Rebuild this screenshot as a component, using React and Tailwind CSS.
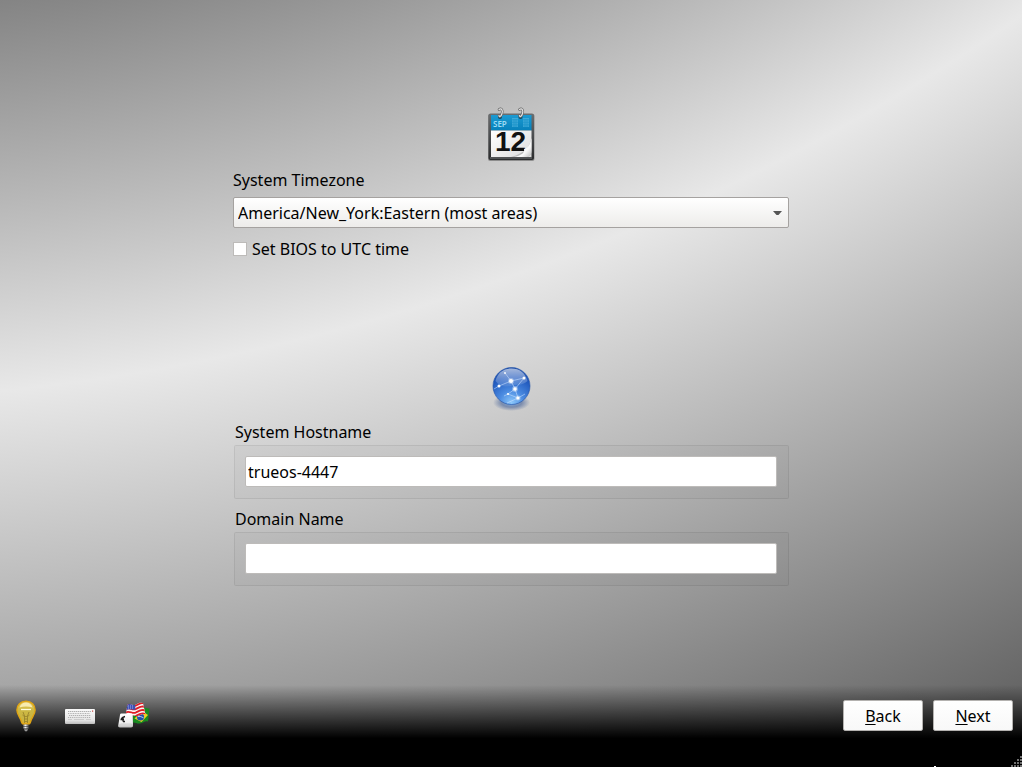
import React from "react";

function CalendarIcon() {
  return (
    <svg width="48" height="56" viewBox="0 0 48 56" aria-hidden="true">
      <defs>
        <linearGradient id="calFrame" x1="0" y1="0" x2="0" y2="1">
          <stop offset="0" stopColor="#6b6e70" />
          <stop offset="0.5" stopColor="#4a4c4e" />
          <stop offset="1" stopColor="#2b2c2d" />
        </linearGradient>
        <linearGradient id="calHead" x1="0" y1="0" x2="0" y2="1">
          <stop offset="0" stopColor="#1b9ad2" />
          <stop offset="1" stopColor="#0781bb" />
        </linearGradient>
        <linearGradient id="calPage" x1="0" y1="0" x2="1" y2="1">
          <stop offset="0" stopColor="#ffffff" />
          <stop offset="1" stopColor="#dcdcdc" />
        </linearGradient>
        <linearGradient id="calCurl" x1="0" y1="0" x2="1" y2="1">
          <stop offset="0.4" stopColor="#ffffff" />
          <stop offset="0.7" stopColor="#f8f8f8" />
          <stop offset="1" stopColor="#b9b9b9" />
        </linearGradient>
      </defs>
      <rect x="1" y="9" width="46.500" height="47" rx="2" fill="#000" opacity="0.3" />
      <rect x="1.5" y="8.5" width="45.500" height="46.500" rx="2" fill="url(#calFrame)" />
      <rect x="4" y="10" width="40.5" height="15.500" fill="url(#calHead)" />
      <rect x="4" y="25.500" width="40.5" height="26.500" fill="url(#calPage)" />
      <rect x="3" y="52.500" width="42" height="1" fill="#77797b" />
      <text x="6" y="21.5" fontSize="8" fontWeight="600" fill="#9fdcf4" className="font-['Noto_Sans',sans-serif]">SEP</text>
      <g fill="#5fbde4" opacity="0.55">
        <rect x="25" y="13" width="6" height="9" />
        <rect x="36" y="13" width="6" height="9" />
      </g>
      <g stroke="#1590c9" strokeWidth="0.700" opacity="0.8">
        <path d="M25 14.800h6M25 17.300h6M25 19.800h6M27 14v8M29 14v8" />
        <path d="M36 14.800h6M36 17.300h6M36 19.800h6M38 14v8M40 14v8" />
      </g>
      <text x="23.5" y="46" textAnchor="middle" fontSize="28" fontWeight="700" fill="#111" className="font-['Liberation_Sans',sans-serif]">12</text>
      <path d="M44.5 31C43.5 42 38 48 24 52h14c4 0 6.500-2 6.500-6z" fill="#7d7d7d" opacity="0.4" />
      <path d="M44.500 33C43 39.500 41.500 43 37 44 38 48 34 50.500 27 52h11c4 0 6.500-2 6.500-6z" fill="url(#calCurl)" />
      <g fill="none" strokeLinecap="round">
        <circle cx="13" cy="12" r="2" fill="#14465e" />
        <circle cx="33.500" cy="12" r="2" fill="#14465e" />
        <path d="M12 4.500c2.500-2 4 1 3 4S12.500 12.500 12 10.500" stroke="#666" strokeWidth="2.600" />
        <path d="M32.500 4.500c2.500-2 4 1 3 4S33 12.500 32.500 10.500" stroke="#666" strokeWidth="2.600" />
        <path d="M12 4.500c2.500-2 4 1 3 4S12.500 12.500 12 10.500" stroke="#e2e2e2" strokeWidth="1.200" />
        <path d="M32.500 4.500c2.500-2 4 1 3 4S33 12.500 32.500 10.500" stroke="#e2e2e2" strokeWidth="1.200" />
      </g>
    </svg>
  );
}

function NetworkGlobeIcon() {
  return (
    <svg width="48" height="48" viewBox="0 0 48 48" aria-hidden="true">
      <defs>
        <radialGradient id="globeBody" cx="0.5" cy="0.95" r="0.95">
          <stop offset="0" stopColor="#8cc8fb" />
          <stop offset="0.35" stopColor="#4a8ae0" />
          <stop offset="0.75" stopColor="#2159bd" />
          <stop offset="1" stopColor="#1a4ba6" />
        </radialGradient>
        <linearGradient id="globeShine" x1="0" y1="0" x2="0" y2="1">
          <stop offset="0" stopColor="#ffffff" stopOpacity="0.6" />
          <stop offset="1" stopColor="#ffffff" stopOpacity="0.08" />
        </linearGradient>
        <radialGradient id="globeShadow">
          <stop offset="0" stopColor="#7db4ee" stopOpacity="0.95" />
          <stop offset="0.55" stopColor="#59719f" stopOpacity="0.7" />
          <stop offset="1" stopColor="#59719f" stopOpacity="0" />
        </radialGradient>
      </defs>
      <ellipse cx="24.500" cy="38.500" rx="18.500" ry="8.500" fill="url(#globeShadow)" />
      <circle cx="24.500" cy="22" r="18.500" fill="url(#globeBody)" stroke="#1c4fa8" strokeWidth="0.600" />
      <path d="M8.500 17C10.500 9 16.500 4.500 24.500 4.500s14 4.500 16 12.500c-5 5-11 3-17 5-6 1.500-11 0-15-5z" fill="url(#globeShine)" />
      <g stroke="#cfe4ff" strokeWidth="0.900" opacity="0.6" fill="none">
        <path d="M24 17L18 9M24 17l13-3M24 17l-12 5M24 17l4 8M28 25l9-11M28 25l-7 5M28 25l3 9M21 30l10 4M31 34l-11 5M31 34l7-4M12 22l-5 3M21 30l-4 2" />
      </g>
      <g fill="#fff">
        <circle cx="24" cy="17" r="3" opacity="0.35" />
        <circle cx="28" cy="25" r="2.900" opacity="0.35" />
        <circle cx="31" cy="34" r="2.500" opacity="0.35" />
        <circle cx="24" cy="17" r="2" />
        <circle cx="28" cy="25" r="1.800" />
        <circle cx="37" cy="14" r="1.500" />
        <circle cx="12" cy="22" r="1.500" />
        <circle cx="31" cy="34" r="1.500" />
        <circle cx="21" cy="30" r="1.100" />
        <circle cx="18" cy="9" r="0.900" />
      </g>
    </svg>
  );
}

function BulbIcon() {
  return (
    <svg width="32" height="32" viewBox="0 0 32 32" aria-hidden="true">
      <defs>
        <linearGradient id="bulbGlass" x1="0" y1="0" x2="0" y2="1">
          <stop offset="0" stopColor="#e8c75a" />
          <stop offset="0.4" stopColor="#cdb944" />
          <stop offset="0.8" stopColor="#c9b440" />
          <stop offset="1" stopColor="#dfae2c" />
        </linearGradient>
        <linearGradient id="bulbCap" x1="0" y1="0" x2="1" y2="0">
          <stop offset="0" stopColor="#777" />
          <stop offset="0.4" stopColor="#f0f0f0" />
          <stop offset="1" stopColor="#444" />
        </linearGradient>
      </defs>
      <path d="M16 1.200C10.500 1.200 6.900 5 6.900 10c0 5 3.800 7.500 4.800 12.500.3 1 .8 1.500 1.800 1.500h5c1 0 1.500-.5 1.800-1.500 1-5 4.800-7.500 4.800-12.500C25.100 5 21.500 1.200 16 1.200z" fill="url(#bulbGlass)" stroke="#e0a414" strokeWidth="1.400" />
      <path d="M9.500 7.500C10.500 4 13 2.500 16 2.500s5.500 1.500 6.500 5c-4-1.500-9-1.500-13 0z" fill="#fff5c8" opacity="0.8" />
      <path d="M11 9.500h10" stroke="#fffbe0" strokeWidth="1.300" />
      <path d="M13 12l1.500 4v7M19 12l-1.500 4v7M12.500 15c2 2 5 2 7 0M14.500 19h3M14.500 21.500h3" stroke="#98852c" strokeWidth="0.900" fill="none" />
      <rect x="13.200" y="24.500" width="5.600" height="4.500" rx="1" fill="url(#bulbCap)" />
      <path d="M13 26.500h6M13 28.500h6" stroke="#333" strokeWidth="0.600" />
      <path d="M14 29.200h4l-1 2h-2z" fill="#999" />
    </svg>
  );
}

function KeyboardIcon() {
  return (
    <svg width="32" height="32" viewBox="0 0 32 32" aria-hidden="true">
      <defs>
        <linearGradient id="kbBody" x1="0" y1="0" x2="0" y2="1">
          <stop offset="0" stopColor="#fafafa" />
          <stop offset="0.75" stopColor="#e4e4e4" />
          <stop offset="1" stopColor="#bcbcbc" />
        </linearGradient>
      </defs>
      <rect x="1" y="9" width="30" height="15" rx="1" fill="url(#kbBody)" />
      <g stroke="#b0b0b0" strokeWidth="1">
        <path d="M4 11.500h23" strokeDasharray="1.400 0.600" />
        <path d="M4 13.500h22" strokeDasharray="1 0.700" />
        <path d="M5 15.500h22" strokeDasharray="1.300 0.700" />
        <path d="M4 17.500h23" strokeDasharray="1.100 0.800" />
        <path d="M4 19.500h4M10 19.500h10M22 19.500h5" opacity="0.5" />
      </g>
      <rect x="28" y="10.500" width="1.200" height="1.200" fill="#c8403a" />
    </svg>
  );
}

function KeyboardLayoutIcon() {
  return (
    <svg width="32" height="32" viewBox="0 0 32 32" aria-hidden="true">
      <defs>
        <linearGradient id="keyCap" x1="0" y1="0" x2="0" y2="1">
          <stop offset="0" stopColor="#ffffff" />
          <stop offset="0.7" stopColor="#ececec" />
          <stop offset="1" stopColor="#b8b8b8" />
        </linearGradient>
        <clipPath id="starsFlag">
          <path d="M9.500 4.500C12.500 2.500 15 6.500 18 4.500S22 2.500 25 3l2.500 11.500c-3-1.500-5 1-8 1.500s-6-2-9-.5L8 13z" />
        </clipPath>
      </defs>
      <path d="M15 13c4 1 7-3 10-5 2.500-1 4.500.5 6.500.5L30 21.500c-3-1-5 1.500-8 2-3 .500-5-1.500-7-1z" fill="#188a20" />
      <path d="M16.500 18.500L24 11l6 4-6.500 7z" fill="#f0cf21" />
      <circle cx="22.500" cy="17" r="3.600" fill="#2250a8" />
      <path d="M19.500 16.800c2-1 4 0 6 1" stroke="#fff" strokeWidth="0.700" fill="none" />
      <g clipPath="url(#starsFlag)">
        <rect x="6" y="1" width="24" height="18" fill="#f6f6f6" />
        <g stroke="#e01e26" strokeWidth="1.900" fill="none">
          <path d="M7 6c4-3.500 7 1.500 11-.500s6-3.500 11-1.500" />
          <path d="M7 9.500c4-3.500 7 1.500 11-.500s6-3.500 11-1.500" />
          <path d="M7 13c4-3.500 7 1.500 11-.500s6-3.500 11-1.500" />
          <path d="M7 16.500c4-3.500 7 1.500 11-.500s6-3.500 11-1.500" />
        </g>
        <path d="M8 2l9 2 .5 5.500c-3 1-6-1.500-10 1z" fill="#3c50b4" />
        <path d="M10 6h6M10 8h6" stroke="#dfe4ff" strokeWidth="0.800" strokeDasharray="0.800 1.200" />
      </g>
      <path d="M2 15c0-1 .5-1.500 1.500-1.500H13c1.200 0 1.700.5 1.700 1.500L15 25.500c0 1.300-.5 2-2 2H2c-1.500 0-2-.700-1.800-2z" fill="url(#keyCap)" />
      <path d="M.5 26l2-2h11l1.300 2" stroke="#c4c4c4" strokeWidth="0.600" fill="none" />
      <path d="M7 16.500C4.500 17 3.500 18 3 19.500M2.500 19.500h3.500M5 17.500v4M5 21.500h2" stroke="#1c1c1c" strokeWidth="1.300" fill="none" />
    </svg>
  );
}

function SizeGrip() {
  return (
    <svg width="12" height="12" viewBox="0 0 12 12" aria-hidden="true" className="absolute right-0 bottom-0">
      <g fill="#6e6e6e">
        <path d="M10 1h2v2h-2zM7 4h2v2H7zM10 4h2v2h-2zM4 7h2v2H4zM7 7h2v2H7zM10 7h2v2h-2zM1 10h2v2H1zM4 10h2v2H4zM7 10h2v2H7zM10 10h2v2h-2z" />
      </g>
    </svg>
  );
}

function TextField({ id, label, value }) {
  return (
    <div className="flex flex-col gap-px">
      <label htmlFor={id} className="pl-0.5">{label}</label>
      <div className="ml-px rounded-xs border border-black/7 bg-black/2 pt-2.5 pr-[11px] pb-[11px] pl-2.5">
        <input
          id={id}
          type="text"
          defaultValue={value}
          className="block h-[31px] w-full rounded-xs border border-[#bdbbb9] bg-white px-0.5 outline-none"
        />
      </div>
    </div>
  );
}

function WizardButton({ hotkey, rest }) {
  return (
    <button
      type="button"
      className="h-[31px] w-20 rounded-xs border border-[#b4b2b0] bg-linear-to-b from-white to-[#f8f8f8]"
    >
      <span className="underline decoration-1 underline-offset-2">{hotkey}</span>{rest}
    </button>
  );
}

export default function App() {
  return (
    <div className="relative flex min-h-screen flex-col bg-[radial-gradient(ellipse_274%_365%_at_-21.6%_-233%,#848484_64.3%,#e8e8e8_78.2%,#666666_98.9%)] font-['Noto_Sans',sans-serif] text-base leading-6 text-black">
      <main className="mx-auto flex w-full max-w-[556px] flex-1 flex-col pt-[105px]">
        <section className="flex flex-col">
          <div className="flex justify-center">
            <CalendarIcon />
          </div>
          <label htmlFor="timezone" className="mt-[7px]">System Timezone</label>
          <div className="mt-[5px] grid items-center">
            <select
              id="timezone"
              className="col-start-1 row-start-1 h-[31px] w-full appearance-none rounded-xs border border-[#a5a2a0] bg-linear-to-b from-white to-[#edecea] px-1 outline-none"
            >
              <option>America/New_York:Eastern (most areas)</option>
            </select>
            <svg width="9" height="5" viewBox="0 0 9 5" aria-hidden="true" className="pointer-events-none col-start-1 row-start-1 mr-[7px] justify-self-end">
              <path d="M0 1h9L5.500 5h-2z" fill="#555" />
            </svg>
          </div>
          <label className="mt-[9px] flex items-center gap-[5px]">
            <input type="checkbox" className="size-3.5 appearance-none border border-[#bdbbb9] bg-white checked:bg-[#3874c8]" />
            Set BIOS to UTC time
          </label>
        </section>
        <section className="mt-[103px] flex flex-col gap-2">
          <div className="flex justify-center">
            <NetworkGlobeIcon />
          </div>
          <TextField id="hostname" label="System Hostname" value="trueos-4447" />
          <TextField id="domain" label="Domain Name" value="" />
        </section>
      </main>
      <footer className="flex h-[82px] items-start justify-between bg-linear-to-b from-transparent to-black to-65% pt-[15px] pr-[9px] pl-2.5">
        <div className="flex gap-[22px]">
          <button type="button" aria-label="Help"><BulbIcon /></button>
          <button type="button" aria-label="On-screen keyboard"><KeyboardIcon /></button>
          <button type="button" aria-label="Keyboard layout"><KeyboardLayoutIcon /></button>
        </div>
        <div className="flex gap-2.5">
          <WizardButton hotkey="B" rest="ack" />
          <WizardButton hotkey="N" rest="ext" />
        </div>
      </footer>
      <span className="absolute right-[86px] bottom-0 h-px w-0.5 bg-white" />
      <SizeGrip />
    </div>
  );
}
